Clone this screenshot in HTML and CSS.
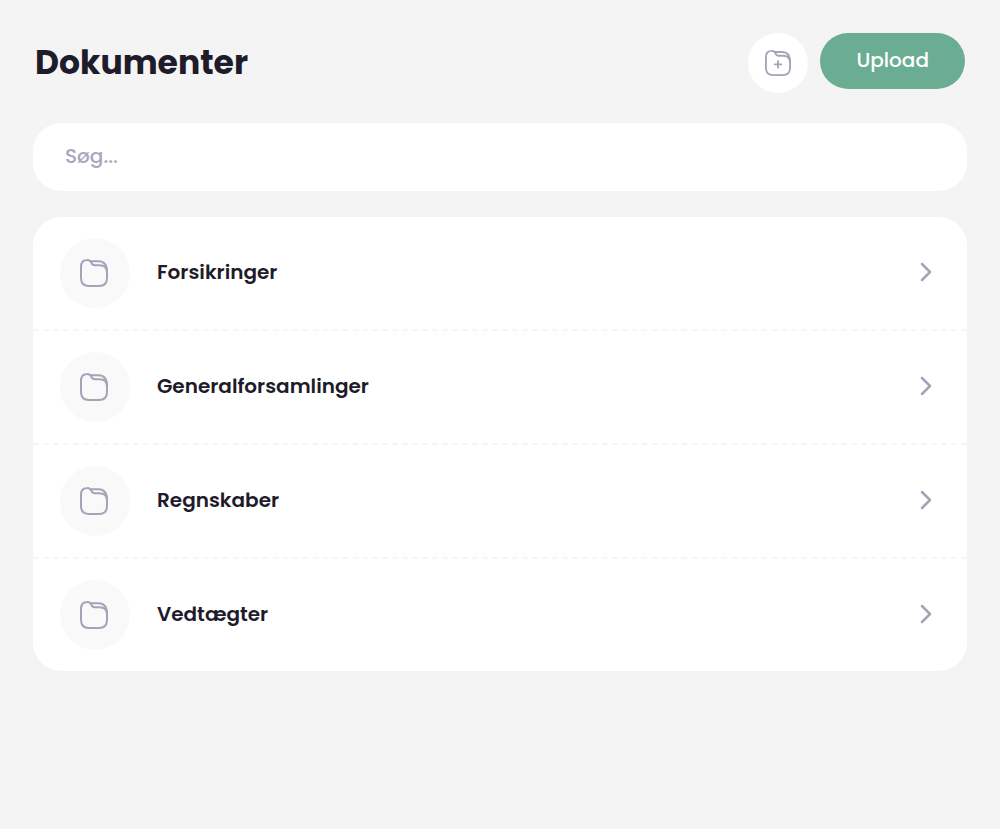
FILE: index.html
```html
<!DOCTYPE html>
<html lang="da">
<head>
    <meta charset="UTF-8">
    <meta name="viewport" content="width=device-width, initial-scale=1.0">
    <title>Dokumenter</title>
    <link rel="stylesheet" href="styles.css">
</head>
<body>

<!-- Shared icons -->
<svg class="sprite" width="0" height="0" aria-hidden="true">
    <symbol id="folder" viewBox="0 0 28 28">
        <path d="M1 8C1 3.500 3 1 7 1C13 .5 9.500 6.200 15 6.200H19.500C24.500 6.200 27 8.500 27 13.500V19C27 24.500 24.500 27 19 27H9C3.500 27 1 24.500 1 19z"/>
        <path d="M10.500 2.200H18.500C24 2.200 27 5 27 13"/>
    </symbol>
    <symbol id="chevron" viewBox="0 0 12 20">
        <path d="M2 2l8 8-8 8"/>
    </symbol>
</svg>

<main class="page">
    <header class="header">
        <h1>Dokumenter</h1>
        <div class="actions">
            <button class="new-folder" type="button" aria-label="Ny mappe">
                <svg class="icon" viewBox="0 0 28 28" aria-hidden="true">
                    <use href="#folder"/>
                    <path d="M14 12v7M10.500 15.500h7"/>
                </svg>
            </button>
            <button class="upload" type="button">Upload</button>
        </div>
    </header>

    <input class="search" type="search" placeholder="Søg..." aria-label="Søg">

    <ul class="folders">
        <li>
            <a href="#forsikringer">
                <span class="circle"><svg class="icon" aria-hidden="true"><use href="#folder"/></svg></span>
                <span class="name">Forsikringer</span>
                <svg class="chevron" aria-hidden="true"><use href="#chevron"/></svg>
            </a>
        </li>
        <li>
            <a href="#generalforsamlinger">
                <span class="circle"><svg class="icon" aria-hidden="true"><use href="#folder"/></svg></span>
                <span class="name">Generalforsamlinger</span>
                <svg class="chevron" aria-hidden="true"><use href="#chevron"/></svg>
            </a>
        </li>
        <li>
            <a href="#regnskaber">
                <span class="circle"><svg class="icon" aria-hidden="true"><use href="#folder"/></svg></span>
                <span class="name">Regnskaber</span>
                <svg class="chevron" aria-hidden="true"><use href="#chevron"/></svg>
            </a>
        </li>
        <li>
            <a href="#vedtaegter">
                <span class="circle"><svg class="icon" aria-hidden="true"><use href="#folder"/></svg></span>
                <span class="name">Vedtægter</span>
                <svg class="chevron" aria-hidden="true"><use href="#chevron"/></svg>
            </a>
        </li>
    </ul>
</main>

</body>
</html>
```

FILE: styles.css
```css
* {box-sizing: border-box; margin: 0; padding: 0;}
body {background-color: #f4f4f4; color: #1e1b2b; font-family: Poppins, Inter, sans-serif;}
button, input {border: none; font-family: inherit;}
.sprite {display: block;}
.page {padding: 33px;}
.header {display: flex; justify-content: space-between; align-items: flex-start; margin-bottom: 30px; padding: 0 2px;}
.header h1 {font-size: 33px; font-weight: 700; line-height: 60px;}
.actions {display: flex; align-items: flex-start; gap: 12px;}
.new-folder {display: flex; align-items: center; justify-content: center; width: 60px; height: 60px; border-radius: 50%; background-color: #fff; cursor: pointer;}
.upload {height: 56px; padding: 0 36px 2px; border-radius: 28px; background-color: #6aad92; color: #fff; font-size: 20px; font-weight: 500; cursor: pointer;}
.icon {width: 28px; height: 28px; fill: none; stroke: #a5a3b8; stroke-width: 2; stroke-linecap: round; stroke-linejoin: round;}
.new-folder .icon {width: 26px; height: 26px;}
.search {display: block; width: 100%; height: 68px; margin-bottom: 26px; padding: 0 32px 2px; border-radius: 28px; background-color: #fff; color: #1e1b2b; font-size: 20px; font-weight: 500;}
.search::placeholder {color: #a9a7bd; opacity: 1;}
.folders {list-style: none; border-radius: 28px; background-color: #fff; box-shadow: 0 4px 28px rgba(0, 0, 0, 0.01);}
.folders li + li {border-top: 2px dashed #f6f6f7;}
.folders a {display: flex; align-items: center; gap: 27px; padding: 21px 35px 21px 27px; color: inherit; text-decoration: none;}
.circle {display: flex; align-items: center; justify-content: center; width: 70px; height: 70px; padding-right: 2px; border-radius: 50%; background-color: #f9f9f9;}
.name {flex: 1; padding-bottom: 3px; font-size: 20px; font-weight: 600;}
.chevron {width: 12px; height: 20px; margin-bottom: 3px; fill: none; stroke: #a5a3b8; stroke-width: 2.5; stroke-linecap: round; stroke-linejoin: round;}
```
